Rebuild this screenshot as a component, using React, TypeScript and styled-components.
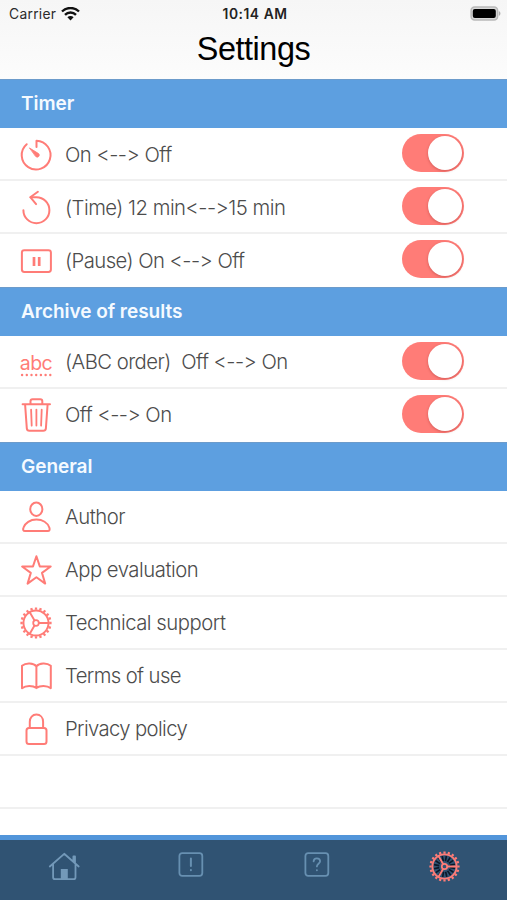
import React from "react";
import styled, { createGlobalStyle } from "styled-components";

const GlobalStyle = createGlobalStyle`
  html, body { margin: 0; padding: 0; }
  body { background: #fff; font-family: Inter, "Liberation Sans", sans-serif; }
  *, *::before, *::after { box-sizing: border-box; }
`;

const CORAL = "#ff7c77";

const Screen = styled.div`
  width: 507px;
  height: 900px;
  display: flex;
  flex-direction: column;
  overflow: hidden;
  background: #fff;
`;

const TopBar = styled.header`
  flex: none;
  height: 79px;
  background: linear-gradient(#f6f6f6, #fcfcfc);
`;

const StatusBar = styled.div`
  height: 27px;
  padding: 0 6px 0 9px;
  display: grid;
  grid-template-columns: 1fr auto 1fr;
  align-items: center;
`;

const Carrier = styled.div`
  display: flex;
  align-items: center;
  gap: 5px;
  font-size: 13.8px;
  color: #2b2b2b;
  letter-spacing: 0.3px;
`;

const Clock = styled.div`
  font-size: 13.8px;
  font-weight: 600;
  color: #222;
  letter-spacing: 0.55px;
`;

const BatteryIcon = styled.svg`
  justify-self: end;
  display: block;
`;

const Title = styled.h1`
  margin: 0;
  text-align: center;
  font: 400 32.4px/45px "Liberation Sans", Arial, sans-serif;
  letter-spacing: -0.45px;
  color: #000;
`;

const SectionHeader = styled.h2`
  flex: none;
  margin: 0;
  height: 49px;
  padding-left: 21px;
  display: flex;
  align-items: center;
  background: #5d9fe0;
  box-shadow: inset 0 1px 0 #6c9bcb;
  color: #f5faff;
  font-size: 19px;
  font-weight: 600;
  letter-spacing: -0.03px;
`;

const Row = styled.div<{ $last?: boolean }>`
  flex: none;
  height: 53px;
  padding: 0 43px 0 20px;
  display: flex;
  align-items: center;
  border-bottom: 2px solid ${(p) => (p.$last ? "#fff" : "#f0f0f0")};
`;

const RowContent = styled.div<{ $raised: boolean }>`
  flex: 1;
  display: flex;
  align-items: center;
  padding-bottom: ${(p) => (p.$raised ? 2 : 0)}px;
`;

const IconSlot = styled.div`
  width: 32px;
  height: 40px;
  margin: 2px 13px 0 0;
  display: flex;
  align-items: center;
  justify-content: center;
  flex: none;

  svg { display: block; overflow: visible; }
`;

const Label = styled.span<{ $spacing: number }>`
  padding-top: 1px;
  white-space: pre;
  font-size: 20.3px;
  font-weight: 300;
  font-feature-settings: "calt" 0;
  color: #4c4c4c;
  letter-spacing: ${(p) => p.$spacing}px;
`;

const Switch = styled.button`
  width: 62.5px;
  height: 38px;
  margin-bottom: 1px;
  padding: 2px;
  border: 0;
  border-radius: 19px;
  background: ${CORAL};
  display: flex;
  justify-content: flex-end;
  align-items: center;
`;

const Knob = styled.span`
  width: 34px;
  height: 34px;
  border-radius: 50%;
  background: #fff;
  box-shadow: 0 1px 3px rgba(100, 0, 0, 0.28);
`;

const Remainder = styled.div`
  flex: 1;
`;

const Strip = styled.div`
  flex: none;
  height: 5px;
  background: #5295da;
`;

const TabBar = styled.nav`
  flex: none;
  height: 60px;
  display: grid;
  grid-template-columns: repeat(4, 1fr);
  background: #305373;
`;

const Tab = styled.a<{ $drop?: number }>`
  display: flex;
  justify-content: center;
  padding: ${(p) => p.$drop ?? 12}px 0 0 1px;
`;

const AbcMark = styled.span`
  display: flex;
  flex-direction: column;
  align-items: center;
  padding-top: 4px;
  font-size: 19.5px;
  line-height: 22px;
  letter-spacing: -0.5px;
  color: ${CORAL};
`;

const line = {
  fill: "none",
  stroke: CORAL,
  strokeWidth: 2,
  strokeLinecap: "round" as const,
  strokeLinejoin: "round" as const,
};

const TimerIcon = () => (
  <svg width="32" height="32" viewBox="0 0 32 32" {...line}>
    <path d="M6.7 5.2A14.4 14.4 0 1 0 16.5 1.7V8" />
    <path d="M9.7 9.1 18.6 14.6A2 2 0 0 1 15.8 17.6Z" fill={CORAL} strokeWidth="0.8" />
  </svg>
);

const ResetIcon = () => (
  <svg width="32" height="36" viewBox="0 0 32 36" {...line}>
    <path d="M3.4 20.2A13 13 0 1 0 16.4 7.2H10.6" />
    <path d="M17.9 1.8 10.3 7.2 16.1 14.1" />
  </svg>
);

const PauseIcon = () => (
  <svg width="32" height="26" viewBox="0 0 32 26" {...line}>
    <rect x="1.9" y="2.2" width="29" height="21.8" rx="2.4" />
    <path d="M14 9v9M19.2 9v9" strokeWidth="2.7" strokeLinecap="butt" />
  </svg>
);

const AbcIcon = () => (
  <AbcMark>
    abc
    <svg width="32" height="2" viewBox="0 0 32 2">
      {[2.1, 6.8, 11.5, 16.2, 20.9, 25.6, 30.3].map((x) => (
        <circle key={x} cx={x} cy="1" r="1.2" fill={CORAL} />
      ))}
    </svg>
  </AbcMark>
);

const TrashIcon = () => (
  <svg width="32" height="36" viewBox="0 0 32 36" {...line}>
    <path d="M2.6 7.3h27.4M10.5 7V4.3a2 2 0 0 1 2-2h7.8a2 2 0 0 1 2 2V7M5.1 7.5l1.7 23.8a2.7 2.7 0 0 0 2.7 2.4h13.7a2.7 2.7 0 0 0 2.7-2.4l1.7-23.8" />
    <path d="M11.1 12.6l.6 16M16.4 12.6v16M21.7 12.6l-.6 16" strokeWidth="1.8" />
  </svg>
);

const PersonIcon = () => (
  <svg width="32" height="32" viewBox="0 0 32 32" {...line}>
    <ellipse cx="16.3" cy="8.2" rx="6.1" ry="6.7" />
    <path d="M5.1 30h22.6c2 0 2.2-1.5 1.7-3.2C27.7 21.8 22.5 18.6 16.4 18.6S5 21.8 3.4 26.8C2.8 28.5 3.1 30 5.1 30Z" />
  </svg>
);

const StarIcon = () => (
  <svg width="32" height="32" viewBox="0 0 32 32" {...line}>
    <path d="M16.4 2.2 19.8 12.4 30.7 12.5 22 18.9 25.2 29.6 16.4 23.2 7.6 29.6 10.8 18.9 2.1 12.5 13 12.4Z" />
  </svg>
);

const polar = (radius: number, degrees: number) => {
  const a = (degrees * Math.PI) / 180;
  return `${(16 + radius * Math.cos(a)).toFixed(2)} ${(16 + radius * Math.sin(a)).toFixed(2)}`;
};

const teeth = Array.from({ length: 20 }, (_, i) => `M${polar(13.2, i * 18)}L${polar(15.6, i * 18)}`).join("");
const shade = Array.from({ length: 16 }, (_, i) => `M${polar(5.5, i * 22.5 + 10)}L${polar(11, i * 22.5 + 10)}`).join("");

const GearIcon = ({ size = 32, shaded = false }: { size?: number; shaded?: boolean }) => (
  <svg width={size} height={size} viewBox="0 0 32 32" {...line}>
    {shaded && <path d={shade} stroke="#0b1829" strokeWidth="1.7" strokeLinecap="butt" />}
    <circle cx="16" cy="16" r="12.5" strokeWidth="1.9" />
    <path d={teeth} strokeWidth="2.3" strokeLinecap="butt" />
    <circle cx="16" cy="16" r="2.8" strokeWidth="1.8" />
    <path d={[0, 120, 240].map((a) => `M${polar(3.2, a)}L${polar(12.5, a)}`).join("")} strokeWidth="1.9" />
  </svg>
);

const BookIcon = () => (
  <svg width="32" height="30" viewBox="0 0 32 30" {...line}>
    <path d="M16.4 5.3C13.6 1.9 6 1.4 2 4.8V27.2C5.7 24.1 13 24.2 16.4 27.1 19.8 24.2 27.1 24.1 30.8 27.2V4.8C26.8 1.4 19.2 1.9 16.4 5.3ZM16.4 5.3V27" />
  </svg>
);

const LockIcon = () => (
  <svg width="32" height="34" viewBox="0 0 32 34" {...line}>
    <rect x="6.5" y="15.9" width="20" height="16.2" rx="2.5" />
    <path d="M9.8 15.6V9.8C9.8 5.5 12.5 2.6 16.4 2.6S23.1 5.5 23.1 9.8v5.8" />
  </svg>
);

const WifiIcon = () => (
  <svg width="19" height="14" viewBox="0 0 19 14" fill="none" stroke="#111" strokeWidth="2.4">
    <path d="M1 4.5a12.1 12.1 0 0 1 17 0M4 7.8a7.8 7.8 0 0 1 11 0" />
    <path d="M6.4 10.3a4.4 4.4 0 0 1 6.2 0L9.5 13.4Z" fill="#111" stroke="none" />
  </svg>
);

const Battery = () => (
  <BatteryIcon width="31" height="15" viewBox="0 0 31 15">
    <rect x="1.1" y="1.1" width="26.5" height="12.8" rx="3.5" fill="#d9d9d9" stroke="#b9b9b9" strokeWidth="1.5" />
    <rect x="2.8" y="2.9" width="23" height="9.2" rx="2" fill="#000" />
    <path d="M28.8 5.1c2.2.8 2.2 4 0 4.8Z" fill="#b0b0b0" />
  </BatteryIcon>
);

const TAB_TINT = "#7399b9";

const HomeIcon = () => (
  <svg width="32" height="30" viewBox="0 0 32 30" fill="none" stroke={TAB_TINT} strokeWidth="1.8" strokeLinecap="round" strokeLinejoin="round">
    <path d="M1.8 14.5 16.2 1.8 30.7 14.5M5.1 12.3V25.2a2 2 0 0 0 2 2h18.4a2 2 0 0 0 2-2V12.3M25.4 9.2V4.5h1.6v6.8" />
    <path d="M12.8 17h7v10h-7Z" fill={TAB_TINT} stroke="none" />
  </svg>
);

const SquareIcon = ({ children }: { children: React.ReactNode }) => (
  <svg width="26" height="26" viewBox="0 0 26 26" fill="none" stroke="#6790b1" strokeWidth="1.8" strokeLinecap="round">
    <rect x="1.4" y="1.1" width="22.9" height="22.8" rx="2.8" />
    {children}
  </svg>
);

type Item = { label: string; spacing: number; icon: React.ReactNode; toggle?: boolean };
type Section = { title: string; items: Item[] };

const sections: Section[] = [
  {
    title: "Timer",
    items: [
      { label: "On <--> Off", spacing: -0.52, icon: <TimerIcon />, toggle: true },
      { label: "(Time) 12 min<-->15 min", spacing: -0.51, icon: <ResetIcon />, toggle: true },
      { label: "(Pause) On <--> Off", spacing: -0.55, icon: <PauseIcon />, toggle: true },
    ],
  },
  {
    title: "Archive of results",
    items: [
      { label: "(ABC order)  Off <--> On", spacing: -0.53, icon: <AbcIcon />, toggle: true },
      { label: "Off <--> On", spacing: -0.52, icon: <TrashIcon />, toggle: true },
    ],
  },
  {
    title: "General",
    items: [
      { label: "Author", spacing: -0.45, icon: <PersonIcon /> },
      { label: "App evaluation", spacing: -0.48, icon: <StarIcon /> },
      { label: "Technical support", spacing: -0.48, icon: <GearIcon /> },
      { label: "Terms of use", spacing: -0.62, icon: <BookIcon /> },
      { label: "Privacy policy", spacing: -0.64, icon: <LockIcon /> },
    ],
  },
];

export default function App() {
  return (
    <Screen>
      <GlobalStyle />
      <TopBar>
        <StatusBar>
          <Carrier>
            Carrier <WifiIcon />
          </Carrier>
          <Clock>10:14 AM</Clock>
          <Battery />
        </StatusBar>
        <Title>Settings</Title>
      </TopBar>

      {sections.map((section, s) => (
        <React.Fragment key={section.title}>
          <SectionHeader>{section.title}</SectionHeader>
          {section.items.map((item, i) => (
            <Row key={item.label} $last={s < sections.length - 1 && i === section.items.length - 1}>
              <RowContent $raised={s > 0}>
                <IconSlot>{item.icon}</IconSlot>
                <Label $spacing={item.spacing}>{item.label}</Label>
              </RowContent>
              {item.toggle && (
                <Switch role="switch" aria-checked="true" aria-label={item.label}>
                  <Knob />
                </Switch>
              )}
            </Row>
          ))}
        </React.Fragment>
      ))}
      <Row />
      <Remainder />

      <Strip />
      <TabBar>
        <Tab>
          <HomeIcon />
        </Tab>
        <Tab>
          <SquareIcon>
            <path d="M12.9 6.6v7.4M12.9 18v.2" strokeWidth="2" />
          </SquareIcon>
        </Tab>
        <Tab>
          <SquareIcon>
            <path d="M9.6 9.4c.1-2 1.4-3 3.2-3s3.3 1.1 3.3 2.9c0 2.4-3.2 2.6-3.2 5.1M12.9 18.1v.2" />
          </SquareIcon>
        </Tab>
        <Tab $drop={11}>
          <GearIcon size={31} shaded />
        </Tab>
      </TabBar>
    </Screen>
  );
}
